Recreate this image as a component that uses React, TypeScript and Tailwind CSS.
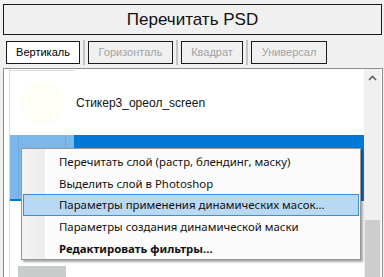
import React from "react";

const tabs = [
  { label: "Вертикаль", active: true, w: "w-[74px]" },
  { label: "Горизонталь", active: false, w: "w-[85px]" },
  { label: "Квадрат", active: false, w: "w-[62px]" },
  { label: "Универсал", active: false, w: "w-[76px]" },
];

const menuItems = [
  { label: "Перечитать слой (растр, блендинг, маску)" },
  { label: "Выделить слой в Photoshop" },
  { label: "Параметры применения динамических масок...", hover: true },
  { label: "Параметры создания динамической маски" },
  { label: "Редактировать фильтры...", bold: true },
];

function ContextMenu() {
  return (
    <div className="absolute left-[21px] top-[148px] w-[340px] border border-[#979797] bg-[#fbfbfb] pt-[2px] shadow-[2px_2px_2px_rgba(0,0,0,0.35)] font-['Noto_Sans',sans-serif] text-[11.4px] text-[#111]">
      <div className="absolute left-0 top-0 bottom-0 w-[24px] bg-gradient-to-r from-[#f3f3f3] to-[#ececec] border-r border-white" />
      {menuItems.map((m) => (
        <div
          key={m.label}
          className={
            "relative mx-[1px] flex h-[21.6px] items-center pl-[35px] border " +
            (m.hover ? "bg-[#b9d8f4] border-[#3b8fdc]" : "border-transparent") +
            (m.bold ? " font-bold" : "")
          }
        >
          {m.label}
        </div>
      ))}
    </div>
  );
}

export default function App() {
  return (
    <div className="relative h-[277px] w-[384px] overflow-hidden bg-[#f0f0f0] font-['Liberation_Sans',Arial,sans-serif]">
      {/* big button */}
      <div className="ml-[3px] mt-[4px] flex h-[31px] w-[379px] items-center justify-center border border-[#1a1a1a] bg-[#f0f0f0] text-[17px] text-[#111]">
        Перечитать PSD
      </div>

      {/* tab buttons */}
      <div className="ml-[6px] mt-[6px] flex h-[23px] items-stretch">
        {tabs.map((t, i) => (
          <React.Fragment key={t.label}>
            {i > 0 && (
              <div className="mx-[3px] -my-[1px] w-[2px] bg-[#c4c4c4]" />
            )}
            <div
              className={
                "flex items-center justify-center border border-[#1a1a1a] text-[11px] " +
                t.w +
                (t.active ? " bg-white text-black" : " bg-[#f0f0f0] text-[#a3a3a3]")
              }
            >
              {t.label}
            </div>
          </React.Fragment>
        ))}
      </div>

      {/* list panel */}
      <div className="ml-[3px] mt-[4px] flex h-[220px] w-[380px] border border-[#8c8c8c] bg-white">
        <div className="flex-1 pl-[5px]">
          <div className="h-full border-l border-[#dcdcdc]">
            {/* row 1 */}
            <div className="flex h-[66px] items-center">
              <div className="mt-[1px] flex h-[64px] w-[64px] items-center justify-center self-start border-t border-[#dcdcdc]">
                <div className="h-[44px] w-[44px] rounded-full bg-[#fefef7]" />
              </div>
              <div className="ml-[2px] mt-[2px] text-[12px] text-[#111]">Стикер3_ореол_screen</div>
            </div>
            {/* row 2 selected */}
            <div className="flex h-[66px] bg-[#0078d7]">
              <div className="flex h-[64px] w-[64px] justify-center bg-[#7db7ea]">
                <div className="h-full w-[48px] border-x border-[#6daae2]" />
              </div>
            </div>
            {/* row 3 */}
            <div className="h-[65px]" />
            {/* row 4 */}
            <div className="flex h-[40px] pl-[8px]">
              <div className="h-full w-[48px] bg-gradient-to-b from-[#c6cac9] to-[#d2d5d4]" />
            </div>
          </div>
        </div>
        {/* scrollbar */}
        <div className="mr-[1px] flex w-[17px] flex-col bg-[#f0f0f0]">
          <div className="flex h-[17px] items-center justify-center">
            <svg width="9" height="6" viewBox="0 0 9 6">
              <path d="M1 5 L4.5 1.5 L8 5" fill="none" stroke="#606060" strokeWidth="1.6" />
            </svg>
          </div>
          <div className="h-[134px]" />
          <div className="mx-[1px] flex-1 bg-[#cdcdcd]" />
        </div>
      </div>

      <ContextMenu />
    </div>
  );
}
